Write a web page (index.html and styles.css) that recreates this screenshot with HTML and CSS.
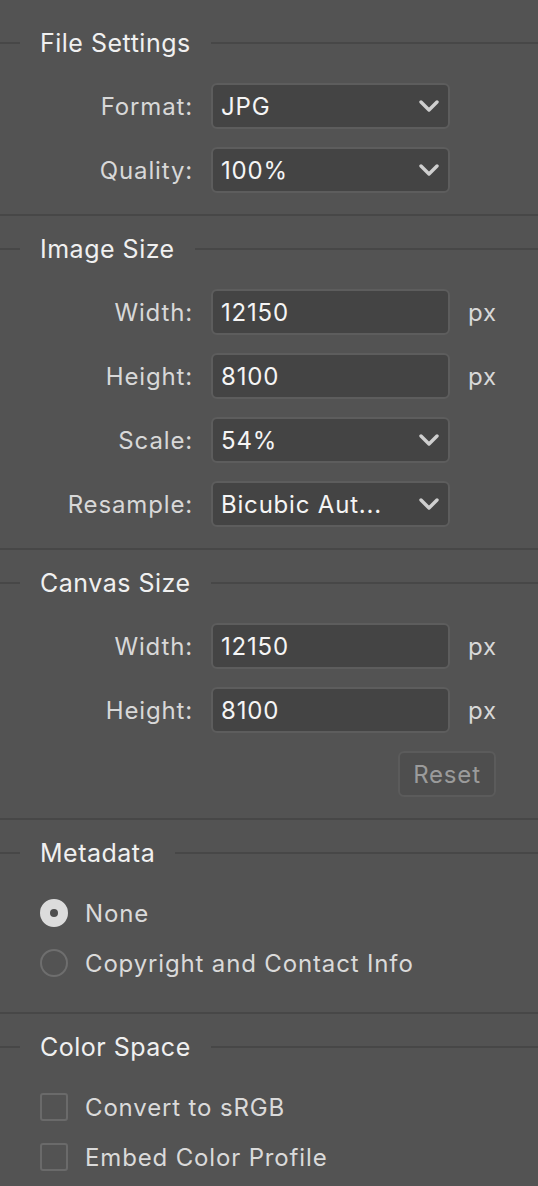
FILE: index.html
```html
<!DOCTYPE html>
<html>
<head>
<meta charset="utf-8">
<link rel="stylesheet" href="styles.css">
</head>
<body>
<div class="panel">
  <section class="section first">
    <div class="header"><span class="hline short"></span><span class="htext">File Settings</span><span class="hline long"></span></div>
    <div class="form">
      <label class="label">Format:</label>
      <div class="field select"><span class="value">JPG</span><svg class="chev" viewBox="0 0 20 12"><path d="M2 2 L10 10 L18 2"/></svg></div>
      <span></span>
      <label class="label">Quality:</label>
      <div class="field select"><span class="value">100%</span><svg class="chev" viewBox="0 0 20 12"><path d="M2 2 L10 10 L18 2"/></svg></div>
      <span></span>
    </div>
  </section>
  <section class="section">
    <div class="header"><span class="hline short"></span><span class="htext">Image Size</span><span class="hline long"></span></div>
    <div class="form">
      <label class="label">Width:</label>
      <div class="field"><span class="value">12150</span></div>
      <span class="unit">px</span>
      <label class="label">Height:</label>
      <div class="field"><span class="value">8100</span></div>
      <span class="unit">px</span>
      <label class="label">Scale:</label>
      <div class="field select"><span class="value">54%</span><svg class="chev" viewBox="0 0 20 12"><path d="M2 2 L10 10 L18 2"/></svg></div>
      <span></span>
      <label class="label">Resample:</label>
      <div class="field select"><span class="value">Bicubic Aut...</span><svg class="chev" viewBox="0 0 20 12"><path d="M2 2 L10 10 L18 2"/></svg></div>
      <span></span>
    </div>
  </section>
  <section class="section">
    <div class="header"><span class="hline short"></span><span class="htext">Canvas Size</span><span class="hline long"></span></div>
    <div class="form">
      <label class="label">Width:</label>
      <div class="field"><span class="value">12150</span></div>
      <span class="unit">px</span>
      <label class="label">Height:</label>
      <div class="field"><span class="value">8100</span></div>
      <span class="unit">px</span>
      <button class="reset">Reset</button>
    </div>
  </section>
  <section class="section meta">
    <div class="header"><span class="hline short"></span><span class="htext">Metadata</span><span class="hline long"></span></div>
    <div class="options">
      <div class="option"><span class="radio on"></span><span class="otext">None</span></div>
      <div class="option"><span class="radio"></span><span class="otext">Copyright and Contact Info</span></div>
    </div>
  </section>
  <section class="section last">
    <div class="header"><span class="hline short"></span><span class="htext">Color Space</span><span class="hline long"></span></div>
    <div class="options">
      <div class="option"><span class="check"></span><span class="otext">Convert to sRGB</span></div>
      <div class="option"><span class="check"></span><span class="otext">Embed Color Profile</span></div>
    </div>
  </section>
</div>
</body>
</html>
```
FILE: styles.css
```css
html, body {
  margin: 0;
  padding: 0;
  background: #535353;
}
body {
  font-family: Inter, "Noto Sans", sans-serif;
  color: #dadada;
  width: 538px;
  height: 1186px;
  overflow: hidden;
}
.section {
  border-bottom: 2px solid #474747;
  padding: 18px 0 21px;
}
.section.first {
  padding-top: 28px;
}
.header {
  display: flex;
  align-items: center;
  height: 30px;
  gap: 20px;
}
.hline {
  height: 2px;
  background: #474747;
}
.hline.short { width: 20px; }
.hline.long { flex: 1; }
.htext {
  font-size: 25px;
  letter-spacing: 0.5px;
  color: #f0f0f0;
  line-height: 30px;
}
.form {
  margin-top: 25px;
  display: grid;
  grid-template-columns: 193px 239px 28px;
  column-gap: 18px;
  row-gap: 18px;
}
.label {
  font-size: 24px;
  letter-spacing: 0.85px;
  text-align: right;
  align-self: center;
  color: #d8d8d8;
}
.field {
  height: 46px;
  box-sizing: border-box;
  border: 2px solid #5d5d5d;
  border-radius: 6px;
  background: #444444;
  display: flex;
  align-items: center;
  padding: 0 9px 0 8px;
}
.value {
  flex: 1;
  font-size: 24px;
  letter-spacing: 0.8px;
  color: #f5f5f5;
  white-space: nowrap;
}
.chev {
  width: 20px;
  height: 12px;
  fill: none;
  stroke: #cfcfcf;
  stroke-width: 3.4;
  stroke-linecap: round;
  stroke-linejoin: round;
}
.unit {
  font-size: 24px;
  letter-spacing: 0.8px;
  align-self: center;
  color: #d8d8d8;
}
.reset {
  grid-column: 2 / 4;
  justify-self: end;
  width: 98px;
  height: 46px;
  box-sizing: border-box;
  border: 2px solid #5b5b5b;
  border-radius: 6px;
  background: #4e4e4e;
  color: #9b9b9b;
  font-family: inherit;
  font-size: 24px;
  letter-spacing: 0.8px;
  padding: 0;
}
.options {
  margin-top: 20px;
  padding-left: 40px;
  display: flex;
  flex-direction: column;
}
.option {
  display: flex;
  align-items: center;
  height: 50px;
  gap: 17px;
}
.otext {
  font-size: 24px;
  letter-spacing: 0.85px;
  color: #dadada;
}
.radio {
  width: 28px;
  height: 28px;
  box-sizing: border-box;
  border-radius: 50%;
  border: 2px solid #6e6e6e;
  position: relative;
}
.radio.on {
  background: #dcdcdc;
  border-color: #dcdcdc;
}
.radio.on::after {
  content: "";
  position: absolute;
  left: 50%;
  top: 50%;
  width: 8px;
  height: 8px;
  margin: -4px 0 0 -4px;
  border-radius: 50%;
  background: #4d4d4d;
}
.check {
  width: 28px;
  height: 28px;
  box-sizing: border-box;
  border: 2px solid #6a6a6a;
  border-radius: 3px;
}
.meta {
  padding-bottom: 24px;
}
.last {
  border-bottom: none;
}
```
